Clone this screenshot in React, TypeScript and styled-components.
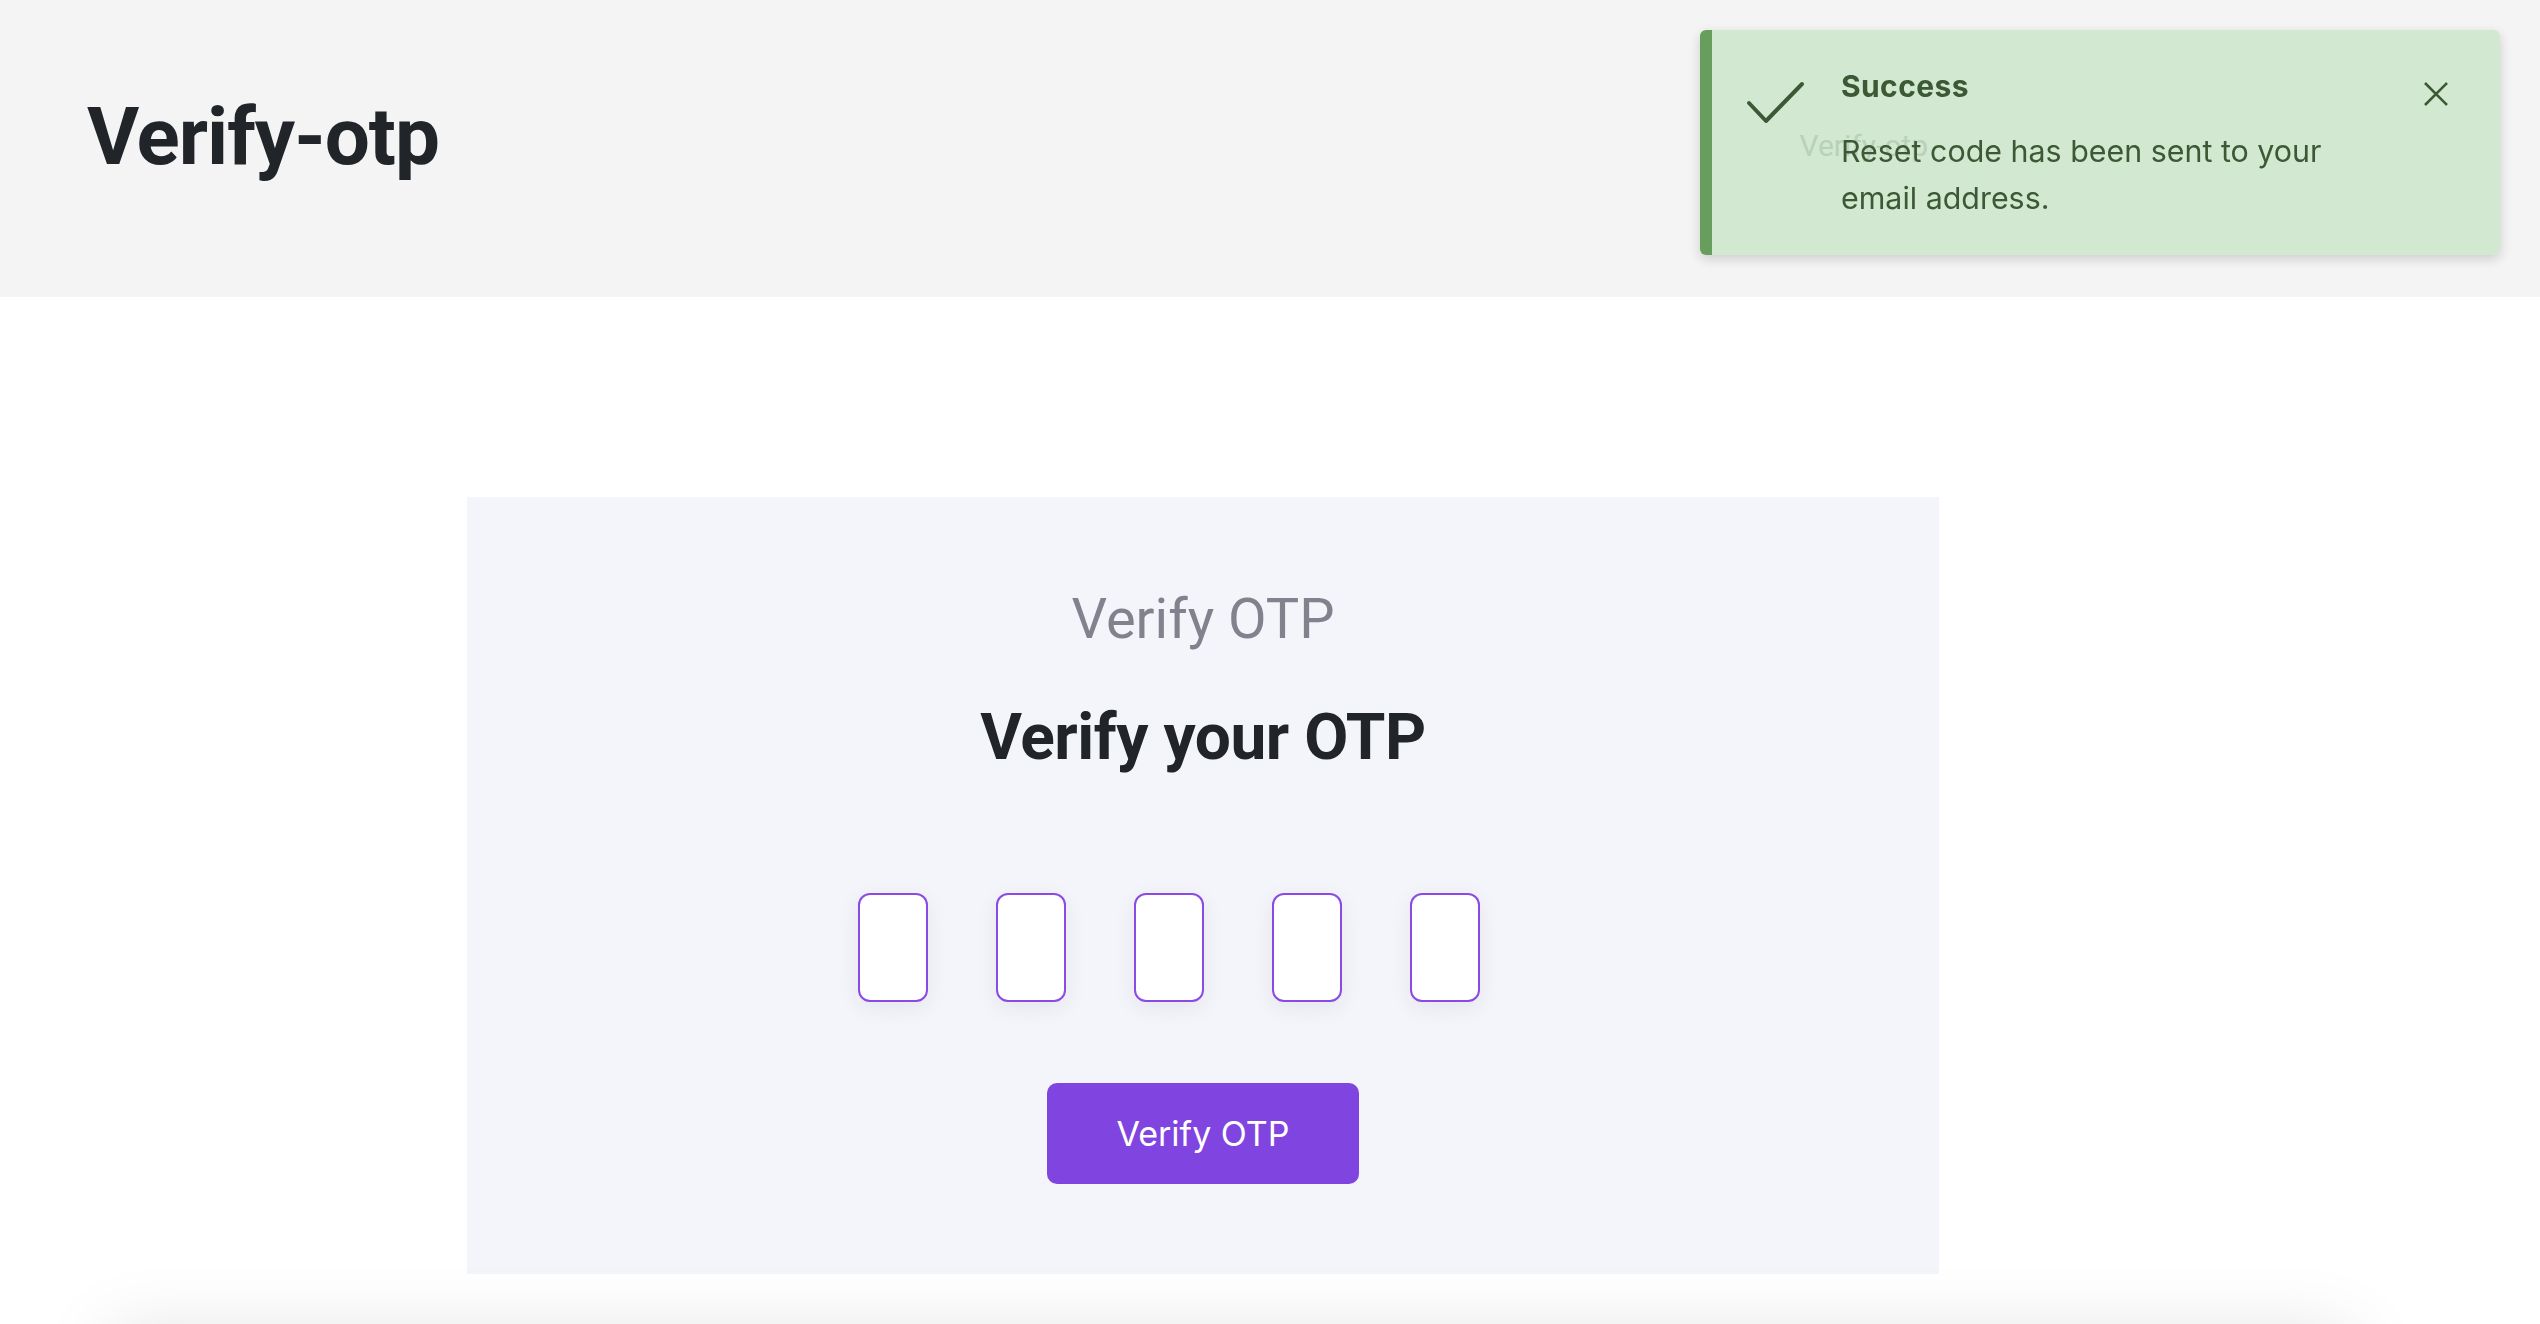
import React from 'react';
import styled, { createGlobalStyle } from 'styled-components';

const GlobalStyle = createGlobalStyle`
  html, body {
    margin: 0;
    padding: 0;
    background: #ffffff;
    font-family: Roboto, "Liberation Sans", sans-serif;
    color: #212529;
  }

  * {
    box-sizing: border-box;
  }
`;

const PageHeader = styled.header`
  align-items: flex-start;
  background: #f4f4f4;
  display: flex;
  height: 297px;
  justify-content: space-between;
  padding: 89px 612px 0 87px;
`;

const PageTitle = styled.h1`
  color: #212529;
  font-size: 80px;
  font-weight: 700;
  letter-spacing: -1px;
  line-height: 96px;
  margin: 0;
`;

const Crumb = styled.div`
  color: #495057;
  font-size: 30px;
  line-height: 36px;
  margin-top: 39px;
`;

const Main = styled.main`
  padding: 200px 0 0 467px;
`;

const Card = styled.section`
  align-items: center;
  background: #f4f5fa;
  display: flex;
  flex-direction: column;
  padding: 89px 0 90px;
  width: 1472px;
`;

const CardLabel = styled.div`
  color: #82828f;
  font-size: 56px;
  font-weight: 400;
  line-height: 67px;
`;

const CardTitle = styled.h2`
  color: #212529;
  font-size: 64px;
  font-weight: 700;
  letter-spacing: -0.45px;
  line-height: 77px;
  margin: 46px 0 0;
`;

const OtpRow = styled.div`
  display: flex;
  margin-top: 117px;
`;

const OtpBox = styled.input`
  background: #ffffff;
  border: 2px solid #8a4ae6;
  border-radius: 12px;
  box-shadow: 0 6px 22px rgba(40, 40, 80, 0.07);
  font-family: Inter, sans-serif;
  font-size: 40px;
  height: 109px;
  margin-right: 68px;
  outline: none;
  text-align: center;
  width: 70px;
`;

const VerifyButton = styled.button`
  background: #8044e0;
  border: none;
  border-radius: 10px;
  color: #ffffff;
  cursor: pointer;
  font-family: Inter, "Liberation Sans", sans-serif;
  font-size: 34px;
  height: 101px;
  margin-top: 81px;
  width: 312px;
`;

const Footer = styled.footer`
  background: #ffffff;
  box-shadow: 0 0 70px rgba(0, 0, 0, 0.13);
  height: 300px;
  margin: 62px 0 0 110px;
  width: 2240px;
`;

const Toast = styled.div`
  background: rgba(204, 229, 202, 0.86);
  border-left: 12px solid #679e5d;
  border-radius: 6px;
  box-shadow: 0 4px 12px rgba(0, 0, 0, 0.16);
  color: #3b5934;
  display: flex;
  font-family: Inter, "Liberation Sans", sans-serif;
  padding: 34px 50px 33px 33px;
  position: fixed;
  right: 40px;
  top: 30px;
  width: 800px;
`;

const ToastIcon = styled.svg`
  flex: none;
  margin-top: 14px;
`;

const ToastText = styled.div`
  flex: 1;
  margin: 0 34px;
`;

const ToastTitle = styled.div`
  font-size: 30px;
  font-weight: 700;
  letter-spacing: 0.4px;
  line-height: 45px;
`;

const ToastBody = styled.div`
  font-size: 30.4px;
  line-height: 47px;
  margin-top: 19px;
`;

const CloseButton = styled.button`
  background: none;
  border: none;
  cursor: pointer;
  flex: none;
  height: 28px;
  margin-top: 16px;
  padding: 0;
  width: 28px;
`;

function App (): React.ReactElement {
  return (
    <>
      <GlobalStyle />
      <PageHeader>
        <PageTitle>Verify-otp</PageTitle>
        <Crumb>Verify-otp</Crumb>
      </PageHeader>
      <Main>
        <Card>
          <CardLabel>Verify OTP</CardLabel>
          <CardTitle>Verify your OTP</CardTitle>
          <OtpRow>
            {[0, 1, 2, 3, 4].map((i) => (
              <OtpBox key={i} maxLength={1} type='text' />
            ))}
          </OtpRow>
          <VerifyButton>Verify OTP</VerifyButton>
        </Card>
      </Main>
      <Footer />
      <Toast>
        <ToastIcon width='62' height='48' viewBox='0 0 62 48'>
          <path d='M4 25 L21 43 L57 6' fill='none' stroke='#3b5934' strokeWidth='4' strokeLinecap='round' strokeLinejoin='round' />
        </ToastIcon>
        <ToastText>
          <ToastTitle>Success</ToastTitle>
          <ToastBody>Reset code has been sent to your email address.</ToastBody>
        </ToastText>
        <CloseButton aria-label='close'>
          <svg width='28' height='28' viewBox='0 0 28 28'>
            <path d='M3 3 L25 25 M25 3 L3 25' stroke='#3b5934' strokeWidth='2.6' />
          </svg>
        </CloseButton>
      </Toast>
    </>
  );
}

export default App;
